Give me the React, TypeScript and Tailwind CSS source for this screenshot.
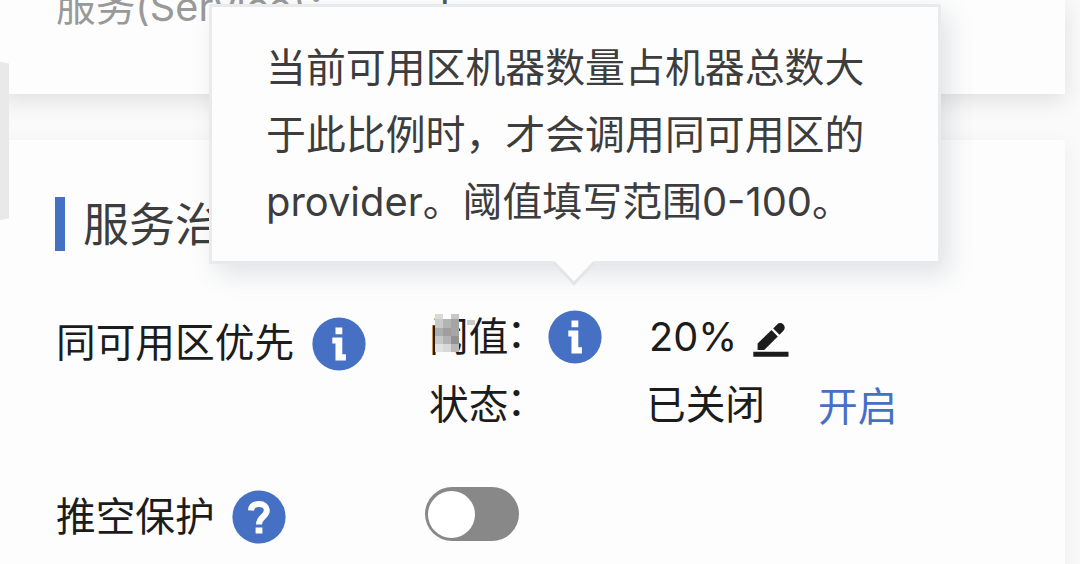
import type { ReactNode } from "react"

interface IconProps {
  className?: string
}

function InfoIcon({ className = "" }: IconProps) {
  return (
    <svg viewBox="0 0 54 54" className={`h-[54px] w-[54px] shrink-0 ${className}`}>
      <circle cx="27" cy="27" r="26.6" fill="#4670c4" />
      <path d="M23.5 10.5h6.8v6.7h-6.8zM20.3 20.5h10v16.7h3.6v6.3H23.5V26.5h-3.2z" fill="#fff" />
    </svg>
  )
}

function HelpIcon({ className = "" }: IconProps) {
  return (
    <svg viewBox="0 0 54 54" className={`h-[54px] w-[54px] shrink-0 ${className}`}>
      <circle cx="27" cy="27" r="26.6" fill="#4670c4" />
      <path
        d="M19 20.5c0.3-4.3 3.4-6.4 8-6.4s7.8 2.5 7.8 6.3c0 6-7.8 6.4-7.8 14.1"
        fill="none"
        stroke="#fff"
        strokeWidth="6"
      />
      <path d="M23.6 37.4h6.8v6.2h-6.8z" fill="#fff" />
    </svg>
  )
}

function EditIcon() {
  return (
    <svg viewBox="0 0 36 36" className="mt-[5px] -ml-[2px] h-9 w-9 shrink-0" fill="#1c1c1c">
      <path d="M0.3 29.8h35.2v4.9H0.3z" />
      <path d="M4.6 28V21.4L18.5 8.1l6.3 6.3L11.2 28z" />
      <path d="M20.2 6.4l3.9-4a4.4 4.4 0 0 1 6.3 0 4.4 4.4 0 0 1 0 6.3l-3.9 4z" />
    </svg>
  )
}

// pixelated patch over the first label character
const mosaic = [
  [6, 0, 8, 5, "#d9d9d9"], [22, 0, 8, 5, "#c8c8c8"],
  [6, 5, 8, 9, "#c9c9c9"], [14, 5, 8, 9, "#b4b4b4"], [22, 5, 8, 9, "#a4a4a4"],
  [6, 14, 8, 8, "#adadad"], [14, 14, 8, 8, "#9f9f9f"], [22, 14, 8, 8, "#a6a6a6"],
  [6, 22, 8, 8, "#c8c8c8"], [14, 22, 8, 8, "#b2b2b2"], [22, 22, 8, 8, "#929292"],
  [6, 30, 8, 8, "#e2e2e2"], [14, 30, 8, 8, "#d8d8d8"], [22, 30, 8, 8, "#b8b8b8"],
  [38, 6, 8, 5, "#cacaca"],
] as const

function Mosaic() {
  return (
    <svg viewBox="0 0 48 40" className="absolute top-[7px] left-0 h-10 w-12" shapeRendering="crispEdges">
      {mosaic.map(([x, y, w, h, fill]) => (
        <rect key={`${x}-${y}`} x={x} y={y} width={w} height={h} fill={fill} />
      ))}
    </svg>
  )
}

function Colon() {
  return <span className="-ml-[2px] inline-block align-[4px] leading-none">：</span>
}

function Tooltip({ children }: { children: ReactNode }) {
  return (
    <div className="absolute top-[4px] left-[209px] z-10 h-[260px] w-[732px] border-[3px] border-[#e9eaeb] bg-[#fdfdfd] pt-[27px] pl-[54px] text-[39.9px] leading-[67px] text-[#3d3d3d] shadow-[8px_10px_24px_rgba(70,85,105,0.16)]">
      {children}
      <svg viewBox="0 0 42 26" className="absolute top-[254px] left-[341px] h-[26px] w-[42px]">
        <path d="M1 0L21 22.5 41 0z" fill="#fdfdfd" />
        <path d="M1 1.5L21 22.5 41 1.5" fill="none" stroke="#e4e5e6" strokeWidth="3" />
      </svg>
    </div>
  )
}

export default function App() {
  return (
    <div className="relative h-[564px] w-[1080px] overflow-hidden bg-[#fafafa] font-['Inter','Noto_Sans_CJK_SC',sans-serif] text-[39.7px] text-[#1c1c1c]">
      <section className="h-[94px] w-[1065px] bg-[#fdfdfd] shadow-[0_6px_22px_rgba(0,0,0,0.11)]">
        <div className="flex h-full items-start pl-14 leading-[60px] text-[#999]">
          <span className="-mt-[23px] w-[384px] whitespace-nowrap">服务(Service)：</span>
          <span className="-mt-[44px] text-[#555]">p</span>
        </div>
      </section>

      <section className="relative mt-[46px] h-[460px] w-[1065px] bg-[#fdfdfd] pt-[57px] pl-[55px] shadow-[0_6px_22px_rgba(0,0,0,0.06)]">
        <h2 className="flex h-[54px] items-center gap-[18px] text-[46px] leading-[54px] text-[#3d3d3d]">
          <span className="h-[54px] w-[10px] bg-[#4670c4]" />
          服务治理
        </h2>

        <div className="mt-[52px] flex h-[136px] pl-px">
          <div className="flex h-20 w-[373px] items-center leading-[60px]">
            <span>同可用区优先</span>
            <InfoIcon className="mt-px ml-[18px]" />
          </div>
          <div className="flex flex-col">
            <div className="flex h-[68px] items-center">
              <span className="relative h-[60px] w-[119px] leading-[60px] whitespace-nowrap">
                阈值
                <Colon />
                <Mosaic />
              </span>
              <InfoIcon />
              <span className="ml-[47px] w-[106px] leading-[60px]">20%</span>
              <EditIcon />
            </div>
            <div className="flex h-[68px] items-center leading-[60px]">
              <span className="h-[60px] w-[217px]">
                状态
                <Colon />
              </span>
              <span className="w-[172px]">已关闭</span>
              <a className="mt-[4px] text-[#4670c4]">开启</a>
            </div>
          </div>
        </div>

        <div className="mt-[51px] flex h-[54px] items-center pl-px">
          <div className="flex w-[369px] items-center leading-[54px]">
            <span>推空保护</span>
            <HelpIcon className="ml-[17px]" />
          </div>
          <button className="-mt-[6px] flex h-[54px] w-[94px] items-center rounded-full bg-[#888] pl-[3px]">
            <span className="h-[47px] w-[47px] rounded-full bg-white" />
          </button>
        </div>
      </section>

      <div className="absolute top-[55px] left-[-31px] h-[172px] w-10 bg-[#e9e9e9] [clip-path:polygon(0_0,100%_5%,100%_95%,0_100%)]" />

      <Tooltip>
        <p>当前可用区机器数量占机器总数大</p>
        <p>于此比例时，才会调用同可用区的</p>
        <p>provider。阈值填写范围0-100。</p>
      </Tooltip>
    </div>
  )
}
